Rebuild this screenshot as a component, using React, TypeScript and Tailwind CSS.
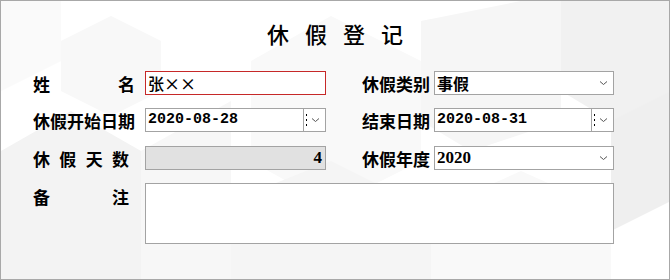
import React from 'react';

const cjk = '"Noto Sans CJK SC", "Noto Sans", sans-serif';

function Chevron() {
  return (
    <svg width="9" height="6" viewBox="0 0 9 6" className="shrink-0">
      <path d="M1 1.5 L4.5 4.5 L8 1.5" fill="none" stroke="#555" strokeWidth="1" />
    </svg>
  );
}

function Label({ text, spread = false, width }: { text: string; spread?: boolean; width: number }) {
  return (
    <div
      className={'flex font-bold text-[17px] leading-none text-black ' + (spread ? 'justify-between' : '')}
      style={{ width }}
    >
      {spread ? text.split('').map((c, i) => <span key={i}>{c}</span>) : <span className="whitespace-nowrap">{text}</span>}
    </div>
  );
}

function Select({ value, mono = false }: { value: string; mono?: boolean }) {
  return (
    <div className="ml-[4px] flex h-[24px] w-[180px] items-center justify-between border border-[#a3a3a3] bg-white pl-[2px] pr-[5px]">
      <span
        className={mono ? 'text-[17px] font-bold' : 'text-[16px] font-bold'}
        style={{ fontFamily: mono ? '"Liberation Serif", serif' : cjk }}
      >
        {value}
      </span>
      <Chevron />
    </div>
  );
}

function DateBox({ value, width, className = '' }: { value: string; width: number; className?: string }) {
  return (
    <div className={'flex h-[24px] items-stretch border border-[#a3a3a3] bg-white ' + className} style={{ width }}>
      <span
        className="flex flex-1 items-center pl-[2px] text-[15px] font-bold text-black"
        style={{ fontFamily: '"Liberation Mono", monospace' }}
      >
        {value}
      </span>
      <div className="flex w-[22px] items-center border-l border-[#a3a3a3]">
        <span className="ml-[2px] mr-[4px] flex h-[12px] flex-col justify-between">
          <span className="block h-[2px] w-[1px] bg-black" />
          <span className="block h-[2px] w-[1px] bg-black" />
          <span className="block h-[2px] w-[1px] bg-black" />
        </span>
        <Chevron />
      </div>
    </div>
  );
}

function Backdrop() {
  return (
    <svg className="pointer-events-none absolute inset-0" width="670" height="280" viewBox="0 0 670 280">
      <polygon points="0,150 70,110 140,150 140,280 0,280" fill="#f3f3f3" />
      <polygon points="140,150 230,100 230,280 140,280" fill="#f7f7f7" />
      <polygon points="60,40 110,15 160,40 160,90 110,115 60,90" fill="#f8f8f8" />
      <polygon points="250,60 330,15 420,60 420,160 330,205 250,160" fill="#f9f9f9" />
      <polygon points="420,20 520,0 560,0 560,120 470,150 420,120" fill="#f6f6f6" />
      <polygon points="560,0 670,0 670,150 610,120 560,90" fill="#f1f1f1" />
      <polygon points="610,120 670,90 670,200 610,230" fill="#efefef" />
      <polygon points="230,200 330,160 430,210 430,280 230,280" fill="#f5f5f5" />
      <polygon points="430,210 520,170 610,210 610,280 430,280" fill="#f9f9f9" />
      <polygon points="0,0 60,0 60,60 0,90" fill="#fafafa" />
    </svg>
  );
}

export default function App() {
  return (
    <div
      className="relative h-[280px] w-[670px] overflow-hidden border border-[#a8a8a8] bg-white text-black"
      style={{ fontFamily: cjk }}
    >
      <Backdrop />
      <div className="relative">
        <div className="mt-[17px] flex h-[30px] items-center justify-center pl-[16px] text-[22px] font-medium tracking-[16px]">
          休假登记
        </div>

        <div className="mt-[23px] pl-[32px]">
          <div className="flex h-[24px] items-center">
            <Label text="姓名" spread width={102} />
            <div className="ml-[10px] flex h-[24px] w-[181px] items-center border border-[#c62828] bg-white pl-[2px] text-[16px] font-medium">
              张××
            </div>
            <div className="ml-[36px]">
              <Label text="休假类别" width={68} />
            </div>
            <Select value="事假" />
          </div>

          <div className="mt-[13px] flex h-[24px] items-center">
            <Label text="休假开始日期" width={102} />
            <DateBox value="2020-08-28" width={181} className="ml-[10px]" />
            <div className="ml-[36px]">
              <Label text="结束日期" width={68} />
            </div>
            <DateBox value="2020-08-31" width={180} className="ml-[4px]" />
          </div>

          <div className="mt-[14px] flex h-[24px] items-center">
            <Label text="休假天数" spread width={96} />
            <div
              className="ml-[16px] flex h-[24px] w-[181px] items-center justify-end border border-[#a3a3a3] bg-[#e1e1e1] pr-[3px] text-[17px] font-bold"
              style={{ fontFamily: '"Liberation Serif", serif' }}
            >
              4
            </div>
            <div className="ml-[36px]">
              <Label text="休假年度" width={68} />
            </div>
            <Select value="2020" mono />
          </div>

          <div className="mt-[13px] flex items-start">
            <div className="pt-[5px]">
              <Label text="备注" spread width={96} />
            </div>
            <div className="ml-[16px] h-[61px] w-[469px] border border-[#a3a3a3] bg-white" />
          </div>
        </div>
      </div>
    </div>
  );
}
